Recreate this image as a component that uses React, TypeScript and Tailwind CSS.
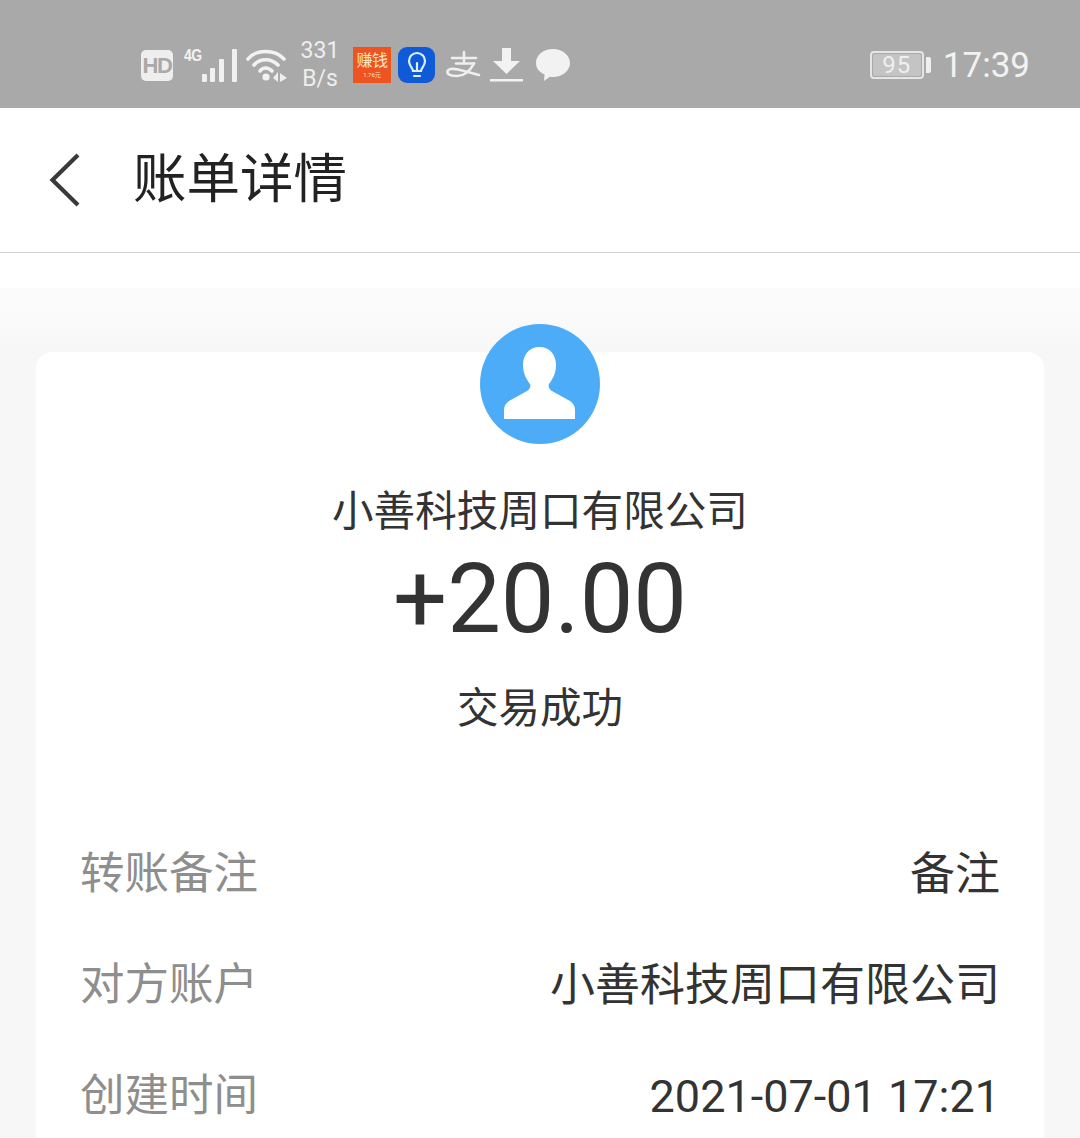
const cjk = "font-['Roboto','Noto_Sans_CJK_SC',sans-serif]"

function HdIcon() {
  return (
    <div className="flex h-[31px] w-[32px] items-center justify-center rounded-[5px] bg-[#eeeeee] font-['Liberation_Sans',sans-serif] text-[22px] font-bold tracking-[-1.5px] text-[#a9a9a9]">
      HD
    </div>
  )
}

function SignalIcon() {
  return (
    <div className="flex h-[36px] w-[54px] items-start">
      <span className="w-[18px] origin-top-left scale-y-[1.15] font-['Liberation_Sans',sans-serif] text-[14px] font-bold leading-[14px] tracking-[-0.5px] text-[#f2f2f2]">4G</span>
      <svg width="36" height="36" viewBox="0 0 36 36" fill="#f0f0f0">
        <rect x="0" y="27" width="5" height="8" rx="1" />
        <rect x="8" y="21" width="5" height="14" rx="1" />
        <rect x="17" y="12" width="5" height="23" rx="1" />
        <rect x="30" y="2" width="5" height="33" rx="1" />
      </svg>
    </div>
  )
}

function WifiIcon() {
  return (
    <svg width="41" height="34" viewBox="0 0 41 34" fill="none">
      <g stroke="#f2f2f2" strokeWidth="3.6" strokeLinecap="round">
        <path d="M2 11C10 1 29 1 38 11" />
        <path d="M8 17C14 10 25 10 32 17" />
        <path d="M14 23C17 19 22 19 26 23" />
      </g>
      <circle cx="20" cy="29" r="3.6" fill="#f2f2f2" />
      <path d="M27 30l5-6v10zM34 25l7 5-7 4z" fill="#eeeeee" />
    </svg>
  )
}

function BulbIcon() {
  return (
    <div className="flex h-[36px] w-[37px] items-center justify-center rounded-[9px] bg-[#0f5ad8]">
      <svg width="22" height="28" viewBox="0 0 22 28" fill="none" stroke="#dff0f5" strokeWidth="2.2" strokeLinecap="round">
        <path d="M7 20c0-3-4-5-4-10a8 8 0 0 1 16 0c0 5-4 7-4 10z" />
        <path d="M8 25h6" />
        <path d="M11 12v7" />
      </svg>
    </div>
  )
}

function AlipayIcon() {
  return (
    <svg width="36" height="32" viewBox="0 0 36 32" fill="none" stroke="#efefef" strokeWidth="2.6" strokeLinecap="round">
      <path d="M7 9h24" />
      <path d="M19 3v11" />
      <path d="M11 14.500h18" />
      <path d="M29 14.500C25 22 19 27 12 27 6 27 2 25.500 2.500 22.500 3 19.500 8 19.500 13 20.500 20 22 27 24 34 26" />
    </svg>
  )
}

function StatusBar() {
  return (
    <div className="flex h-[108px] items-center justify-between bg-[#a9a9a9] pl-[141px] pr-[50px] pt-[22px] text-[#f0f0f0]">
      <div className="flex items-center">
        <HdIcon />
        <div className="ml-[11px]"><SignalIcon /></div>
        <div className="ml-[8px]"><WifiIcon /></div>
        <div className="ml-[14px] flex w-[38px] flex-col items-center font-['Roboto',sans-serif] text-[23px] leading-[28px] text-[#eeeeee]">
          <span>331</span>
          <span>B/s</span>
        </div>
        <div className={`ml-[14px] flex h-[36px] w-[38px] flex-col items-center justify-center bg-[#ee5420] text-[#fbe6c8] ${cjk}`}>
          <span className="text-[16px] leading-[20px] tracking-[-0.5px]">赚钱</span>
          <span className="text-[6px] leading-[8px]">1.76元</span>
        </div>
        <div className="ml-[7px]"><BulbIcon /></div>
        <div className="ml-[10px]"><AlipayIcon /></div>
        <svg className="ml-[8px]" width="35" height="36" viewBox="0 0 35 36" fill="#f2f2f2">
          <path d="M13 1h9v13h9L17.500 27 4 14h9z" />
          <rect x="1" y="32" width="33" height="2.500" />
        </svg>
        <svg className="ml-[11px]" width="35" height="34" viewBox="0 0 35 34" fill="#f2f2f2">
          <path d="M18 1c9 0 17 6 17 14s-8 14-17 14c-1 0-2 0-3-.2L9 33l.5-6.500C4 24 1 20 1 15 1 7 8.500 1 18 1z" />
        </svg>
      </div>
      <div className="flex items-center">
        <div className="flex h-[28px] w-[54px] items-center rounded-[4px] border-2 border-[#e6e6e6] p-[1px]">
          <div className="flex h-full flex-1 items-center justify-center rounded-[2px] bg-[#c4c4c4] font-['Roboto',sans-serif] text-[24px] leading-none tracking-[1px] text-[#efefef]">95</div>
        </div>
        <div className="ml-[2px] h-[16px] w-[5px] rounded-r-[2px] bg-[#eeeeee]" />
        <span className="ml-[12px] font-['Roboto',sans-serif] text-[35px] leading-none text-[#f2f2f2]">17:39</span>
      </div>
    </div>
  )
}

function Row({ label, value }: { label: string; value: string }) {
  return (
    <div className="flex h-[111px] items-center justify-between">
      <span className="text-[44.500px] leading-none text-[#8e8e8e]">{label}</span>
      <span className="text-[45px] leading-none text-[#333333]">{value}</span>
    </div>
  )
}

export default function App() {
  return (
    <div className={`h-[1138px] w-[1080px] overflow-hidden bg-white ${cjk}`}>
      <StatusBar />
      <header className="flex h-[145px] items-center border-b border-[#d2d2d2] bg-white">
        <svg className="ml-[47px]" width="36" height="56" viewBox="0 0 36 56" fill="none" stroke="#3a3a3a" strokeWidth="4.200">
          <path d="M31 3 5.500 28 31 53" />
        </svg>
        <h1 className="ml-[50px] text-[53.500px] leading-none text-[#222222]">账单详情</h1>
      </header>
      <div className="mt-[35px] bg-[linear-gradient(#fcfcfc,#f7f7f7_64px)] px-[36px] pt-[64px]">
        <div className="h-[800px] rounded-t-[16px] bg-white px-[44px]">
          <div className="flex flex-col items-center">
            <div className="-mt-[28px] h-[120px] w-[120px] rounded-full bg-[#4dacf7]">
              <svg width="120" height="120" viewBox="0 0 120 120" fill="white">
                <path d="M59.500 23C70 23 76 31 76 41 76 50 72 56 69 60 68 62 69 65 72 67L90 77C93 79 95 82 95 86V95H24V86C24 82 26 79 29 77L47 67C50 65 51 62 50 60 47 56 43 50 43 41 43 31 49 23 59.500 23Z" />
              </svg>
            </div>
            <p className="mt-[47px] text-[41.600px] leading-[42px] text-[#333333]">小善科技周口有限公司</p>
            <p className="mt-[20px] font-['Roboto',sans-serif] text-[95.500px] leading-[92px] text-[#333333]">+20.00</p>
            <p className="mt-[43px] text-[41.500px] leading-[42px] text-[#333333]">交易成功</p>
          </div>
          <div className="mt-[89px]">
            <Row label="转账备注" value="备注" />
            <Row label="对方账户" value="小善科技周口有限公司" />
            <Row label="创建时间" value="2021-07-01 17:21" />
          </div>
        </div>
      </div>
    </div>
  )
}
